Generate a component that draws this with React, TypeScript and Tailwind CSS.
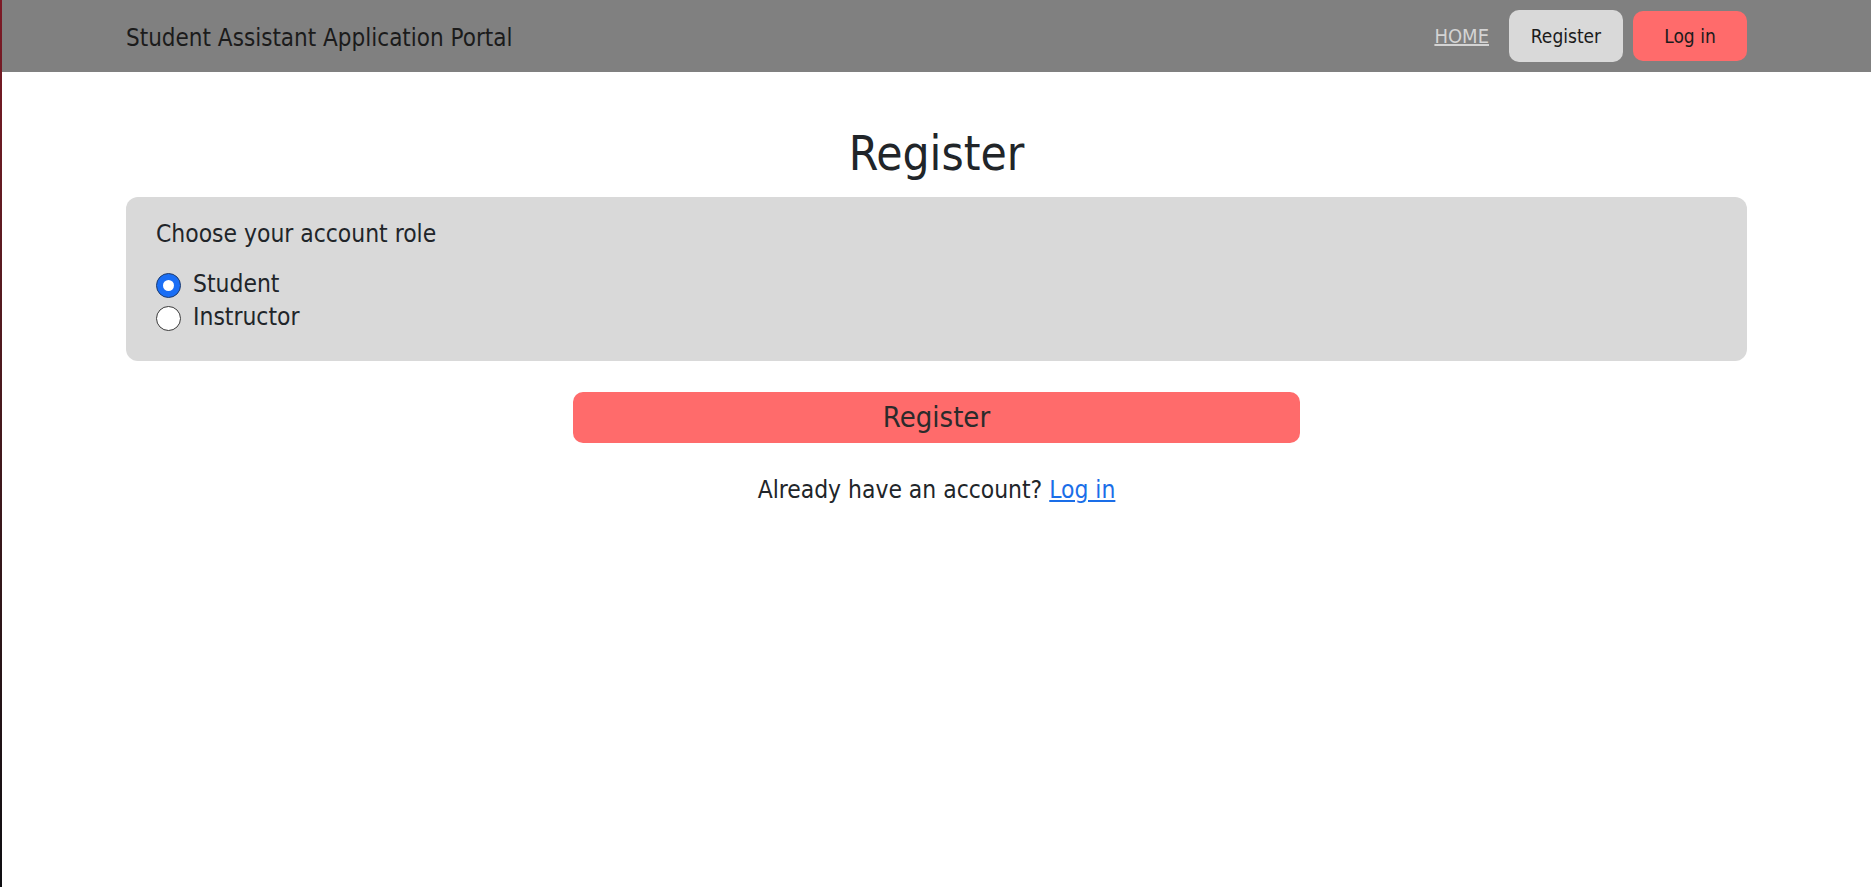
import React, { useState } from "react";

const font = "font-['DejaVu_Sans_Condensed','DejaVu_Sans',sans-serif]";

const Radio = ({ checked }: { checked: boolean }) => (
  <span
    className={
      checked
        ? "flex h-[25px] w-[25px] shrink-0 items-center justify-center rounded-full border border-[#1d3b6e] bg-[#1a6ef5]"
        : "flex h-[25px] w-[25px] shrink-0 items-center justify-center rounded-full border border-[#3a3a3a] bg-white"
    }
  >
    {checked && <span className="h-[11px] w-[11px] rounded-full bg-white" />}
  </span>
);

const Header = () => (
  <header className="flex h-[72px] items-center justify-between bg-[#808080] pl-[124px] pr-[124px]">
    <div className="mt-[4px] text-[24px] text-[#1b1b1b]">Student Assistant Application Portal</div>
    <nav className="flex items-center">
      <a href="#" className="mr-[20px] text-[20px] text-[#d4d4d4] underline">
        HOME
      </a>
      <button className="mr-[10px] h-[52px] w-[114px] rounded-[10px] bg-[#d9d9d9] text-[19px] text-[#1b1b1b]">
        Register
      </button>
      <button className="h-[50px] w-[114px] rounded-[10px] bg-[#ff6b6b] text-[19px] text-[#1b1b1b]">
        Log in
      </button>
    </nav>
  </header>
);

export default function App() {
  const [role, setRole] = useState<"student" | "instructor">("student");

  return (
    <div className={`flex min-h-[887px] bg-white ${font}`}>
      <div className="w-[2px] shrink-0 bg-linear-to-b from-[#7d1a26] to-[#0e0e12]" />
      <div className="flex-1">
        <Header />
        <main className="px-[124px] text-[#212529]">
          <h1 className="mt-[54px] text-center text-[47.5px] leading-[56px]">Register</h1>

          <section className="mt-[15px] h-[164px] rounded-[12px] bg-[#d9d9d9] pl-[30px] pt-[21px]">
            <p className="text-[24.4px] leading-[32px]">Choose your account role</p>
            <div className="mt-[19px] flex flex-col">
              {(["student", "instructor"] as const).map((r) => (
                <label
                  key={r}
                  onClick={() => setRole(r)}
                  className="flex h-[33px] cursor-pointer items-center gap-[12px] text-[24.4px] leading-[33px]"
                >
                  <Radio checked={role === r} />
                  <span className="-mt-[5px]">{r === "student" ? "Student" : "Instructor"}</span>
                </label>
              ))}
            </div>
          </section>

          <div className="mt-[31px] flex justify-center">
            <button className="h-[51px] w-[727px] rounded-[10px] bg-[#ff6b6b] text-[29px] text-[#2b2b2b]">
              Register
            </button>
          </div>

          <p className="mt-[31px] text-center text-[24.4px] leading-[32px]">
            Already have an account?{" "}
            <a href="#" className="text-[#1a6ee8] underline">
              Log in
            </a>
          </p>
        </main>
      </div>
    </div>
  );
}
